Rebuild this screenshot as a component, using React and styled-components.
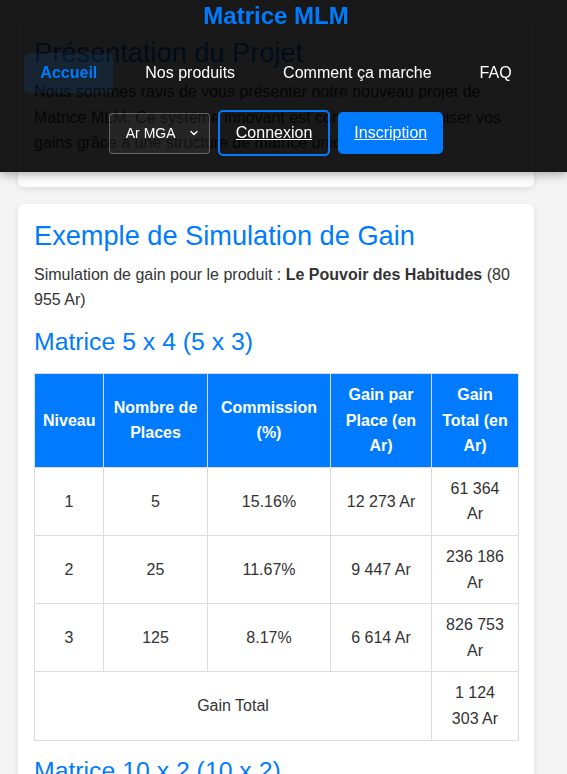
import styled, { createGlobalStyle } from 'styled-components';

const GlobalStyle = createGlobalStyle`
  html, body {
    margin: 0;
    padding: 0;
    background: #f4f4f4;
    font-family: "Liberation Sans", Arial, sans-serif;
    color: #333;
  }
`

const levels = [
  { niveau: 1, places: 5, commission: '15.16%', parPlace: '12 273 Ar', total: '61 364 Ar' },
  { niveau: 2, places: 25, commission: '11.67%', parPlace: '9 447 Ar', total: '236 186 Ar' },
  { niveau: 3, places: 125, commission: '8.17%', parPlace: '6 614 Ar', total: '826 753 Ar' },
]

const App = () => {
  return (
    <>
      <GlobalStyle />
      <Header>
        <HeaderInner>
          <Logo>Matrice MLM</Logo>
          <Nav>
            <NavLink $active>Accueil</NavLink>
            <NavLink>Nos produits</NavLink>
            <NavLink>Comment ça marche</NavLink>
            <NavLink>FAQ</NavLink>
          </Nav>
          <Actions>
            <CurrencySelect>
              Ar MGA
              <svg width="10" height="10" viewBox="0 0 10 10">
                <path d="M2 3.5 L5 6.5 L8 3.5" fill="none" stroke="#fff" strokeWidth="1.4" strokeLinecap="round" strokeLinejoin="round" />
              </svg>
            </CurrencySelect>
            <OutlineBtn>Connexion</OutlineBtn>
            <PrimaryBtn>Inscription</PrimaryBtn>
          </Actions>
        </HeaderInner>
      </Header>
      <Main>
        <Card>
          <CardTitle>Présentation du Projet</CardTitle>
          <Text>
            Nous sommes ravis de vous présenter notre nouveau projet de Matrice MLM. Ce système innovant est conçu pour maximiser vos gains grâce à une structure de matrice unique.
          </Text>
        </Card>
        <Card>
          <CardTitle>Exemple de Simulation de Gain</CardTitle>
          <Text>
            Simulation de gain pour le produit : <strong>Le Pouvoir des Habitudes</strong> (80 955 Ar)
          </Text>
          <SubTitle>Matrice 5 x 4 (5 x 3)</SubTitle>
          <Table>
            <colgroup>
              <col style={{ width: '69px' }} />
              <col style={{ width: '104px' }} />
              <col style={{ width: '123px' }} />
              <col style={{ width: '101px' }} />
              <col style={{ width: '87px' }} />
            </colgroup>
            <thead>
              <tr>
                <Th>Niveau</Th>
                <Th>Nombre de Places</Th>
                <Th>Commission (%)</Th>
                <Th>Gain par Place (en Ar)</Th>
                <Th>Gain Total (en Ar)</Th>
              </tr>
            </thead>
            <tbody>
              {levels.map((l) => (
                <tr key={l.niveau}>
                  <Td>{l.niveau}</Td>
                  <Td>{l.places}</Td>
                  <Td>{l.commission}</Td>
                  <Td>{l.parPlace}</Td>
                  <Td>{l.total}</Td>
                </tr>
              ))}
              <tr>
                <Td colSpan={4}>Gain Total</Td>
                <Td>1 124 303 Ar</Td>
              </tr>
            </tbody>
          </Table>
          <SubTitle>Matrice 10 x 2 (10 x 2)</SubTitle>
        </Card>
      </Main>
    </>
  );
}

const Header = styled.header`
  position: fixed;
  top: 0;
  left: 0;
  right: 0;
  z-index: 10;
  background: rgba(0, 0, 0, 0.9);
  box-shadow: 0 2px 10px rgba(0, 0, 0, 0.35);
`
const HeaderInner = styled.div`
  width: 552px;
  padding: 2px 0 16px;
  display: flex;
  flex-direction: column;
  align-items: center;
`
const Logo = styled.h1`
  margin: 0;
  font-size: 24px;
  font-weight: 700;
  color: #007bff;
  line-height: 28px;
`
const Nav = styled.nav`
  margin-top: 23px;
  display: flex;
  gap: 16px;
`
const NavLink = styled.a`
  display: block;
  padding: 10px 16px;
  line-height: 20px;
  font-size: 16px;
  border-radius: 5px;
  color: ${(p) => (p.$active ? '#007bff' : '#fff')};
  font-weight: ${(p) => (p.$active ? 700 : 400)};
  background: ${(p) => (p.$active ? 'rgba(0, 123, 255, 0.1)' : 'transparent')};
`
const Actions = styled.div`
  margin-top: 17px;
  display: flex;
  align-items: center;
  gap: 8px;
`
const CurrencySelect = styled.div`
  box-sizing: border-box;
  height: 41px;
  width: 101px;
  padding: 0 10px 0 16px;
  display: flex;
  align-items: center;
  justify-content: space-between;
  border: 1px solid rgba(255, 255, 255, 0.3);
  border-radius: 4px;
  background: rgba(255, 255, 255, 0.05);
  color: #fff;
  font-size: 14px;
`
const BaseBtn = styled.a`
  display: block;
  padding: 12px 16px;
  line-height: 18px;
  font-size: 16px;
  color: #fff;
  text-decoration: underline;
  border-radius: 5px;
`
const OutlineBtn = styled(BaseBtn)`
  border: 2px solid #007bff;
`
const PrimaryBtn = styled(BaseBtn)`
  background: #007bff;
`
const Main = styled.main`
  width: 552px;
  box-sizing: border-box;
  padding: 21px 18px 0;
`
const Card = styled.section`
  background: #fff;
  border-radius: 6px;
  box-shadow: 0 2px 6px rgba(0, 0, 0, 0.1);
  padding: 16px;
  margin-bottom: 17px;
`
const CardTitle = styled.h2`
  margin: 0 0 10px;
  font-size: 27.2px;
  font-weight: 400;
  color: #007bff;
`
const Text = styled.p`
  margin: 0 0 15px;
  font-size: 16px;
  line-height: 1.6;
  color: #333;
`
const SubTitle = styled.h3`
  margin: 0 0 17px;
  font-size: 24.8px;
  font-weight: 400;
  color: #007bff;
`
const Table = styled.table`
  width: 100%;
  table-layout: fixed;
  border-collapse: collapse;
  margin-bottom: 16px;
  font-size: 16px;
  line-height: 1.6;
`
const Th = styled.th`
  background: #007bff;
  color: #fff;
  font-weight: 700;
  padding: 8px;
  border: 1px solid #ddd;
  text-align: center;
`
const Td = styled.td`
  padding: 8px 10px;
  border: 1px solid #ddd;
  text-align: center;
  color: #333;
`

export default App;
